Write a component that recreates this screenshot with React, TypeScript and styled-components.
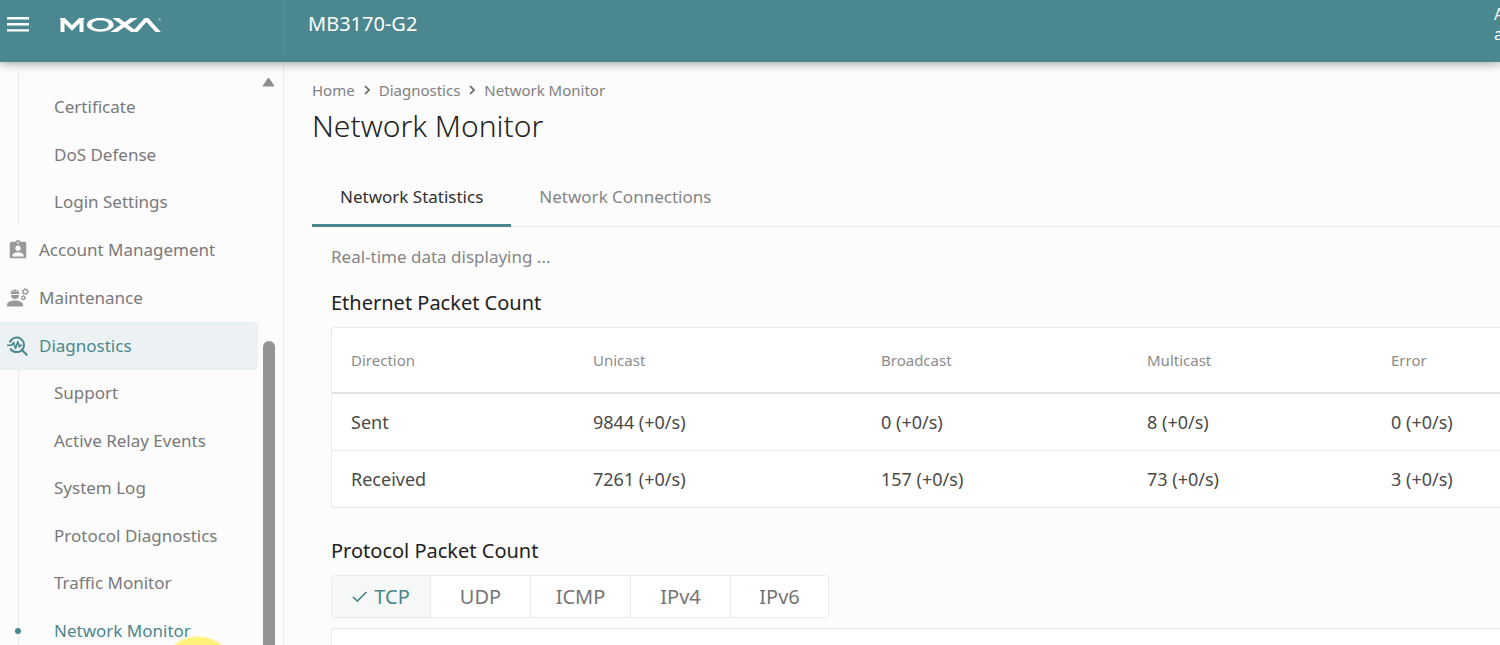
import React from 'react';
import styled, { createGlobalStyle } from 'styled-components';

const teal = '#4b878e';
const line = '#e9e9e9';

const GlobalStyle = createGlobalStyle`
  * { box-sizing: border-box; }
  body {
    margin: 0;
    background: #fcfcfc;
    color: #222;
    font-family: "Noto Sans", "Open Sans", sans-serif;
    overflow: hidden;
  }
  ul, ol { list-style: none; margin: 0; padding: 0; }
  a { color: inherit; text-decoration: none; }
  button { font: inherit; cursor: pointer; }
`;

const Page = styled.div`
  display: flex;
  flex-direction: column;
  height: 100vh;
  overflow: hidden;
`;

const TopBar = styled.header`
  display: flex;
  flex: none;
  height: 62px;
  background: ${teal};
  color: #fff;
  box-shadow: 0 1px 10px rgba(0, 0, 0, 0.4);
  z-index: 1;
`;

const Brand = styled.div`
  display: flex;
  gap: 31px;
  width: 284px;
  height: 53px;
  padding: 14px 0 0 7px;
  border-right: 1px solid #5a949a;
`;

const MenuButton = styled.button`
  display: flex;
  width: 22px;
  height: 20px;
  padding: 0;
  border: 0;
  background: none;
  color: inherit;
`;

const DeviceName = styled.div`
  flex: 1;
  padding: 10px 0 0 24px;
  font-size: 20px;
  line-height: 28px;
`;

const Account = styled.div`
  width: 6px;
  padding-top: 4px;
  font-size: 16px;
  line-height: 20px;
  white-space: nowrap;
`;

const Body = styled.div`
  display: flex;
  flex: 1;
  min-height: 0;
`;

const Sidebar = styled.aside`
  display: flex;
  flex: none;
  justify-content: space-between;
  width: 284px;
  padding-top: 10px;
  border-right: 1px solid ${line};
  overflow: hidden;
`;

const Nav = styled.nav`
  width: 258px;
  font-size: 17px;
  color: #797979;
`;

const SubList = styled.ul<{ $first?: boolean }>`
  margin-left: 18px;
  padding-top: ${(p) => (p.$first ? 12 : 0)}px;
  border-left: 1px solid ${line};
  li:nth-child(even) { padding-top: 1px; }
`;

const SubLink = styled.a<{ $active?: boolean }>`
  display: flex;
  position: relative;
  align-items: center;
  height: 47px;
  padding: 0 0 2px 35px;
  color: ${(p) => (p.$active ? teal : 'inherit')};
`;

const ActiveDot = styled.span`
  position: absolute;
  left: -4px;
  top: 20px;
  width: 6px;
  height: 6px;
  border-radius: 50%;
  background: ${teal};
`;

const PointerHalo = styled.span`
  position: absolute;
  left: 141px;
  top: 29px;
  width: 76px;
  height: 76px;
  border-radius: 50%;
  background: #fff27a;
  box-shadow: 0 0 3px #fff27a;
`;

const GroupLink = styled.a<{ $active?: boolean }>`
  display: flex;
  align-items: center;
  gap: 10px;
  height: 48px;
  padding: 0 0 1px 7px;
  border-radius: 0 4px 4px 0;
  background: ${(p) => (p.$active ? '#ecf2f3' : 'transparent')};
  color: ${(p) => (p.$active ? teal : 'inherit')};
  svg { flex: none; }
`;

const ScrollTrack = styled.div`
  display: flex;
  flex-direction: column;
  align-items: center;
  width: 13px;
  margin-right: 8px;
  padding-top: 5px;
`;

const ScrollThumb = styled.div`
  flex: 1;
  width: 12px;
  margin-top: 254px;
  border-radius: 6px 6px 0 0;
  background: #949494;
`;

const Main = styled.main`
  flex: 1;
  min-width: 0;
  padding: 16px 0 0 28px;
`;

const Crumbs = styled.ol`
  display: flex;
  align-items: center;
  height: 24px;
  font-size: 15px;
  color: #808080;
  li { display: flex; align-items: center; }
  svg { margin: 0 8px; }
`;

const Title = styled.h1`
  margin: 4px 0 0;
  font-size: 30px;
  font-weight: 300;
  line-height: 40px;
`;

const TabBar = styled.div`
  display: flex;
  margin-top: 23px;
  border-bottom: 1px solid ${line};
`;

const Tab = styled.button<{ $active?: boolean }>`
  height: 58px;
  margin-bottom: -1px;
  padding: 0 28px;
  border: 0;
  border-bottom: 3px solid ${(p) => (p.$active ? teal : 'transparent')};
  background: none;
  font-size: 17px;
  color: ${(p) => (p.$active ? '#303030' : '#858585')};
`;

const Panel = styled.section`
  padding: 18px 0 0 19px;
`;

const Status = styled.p`
  margin: 0;
  font-size: 17px;
  line-height: 24px;
  color: #858585;
`;

const SectionTitle = styled.h2<{ $gap: number }>`
  margin: ${(p) => p.$gap}px 0 10px;
  font-size: 20px;
  font-weight: 400;
  line-height: 28px;
`;

const Card = styled.div`
  border: 1px solid ${line};
  border-right: 0;
  border-radius: 4px 0 0 4px;
  background: #fff;
`;

const EmptyCard = styled(Card)`
  min-height: 80px;
  margin-top: 10px;
`;

const Table = styled.table`
  width: 100%;
  table-layout: fixed;
  border-collapse: collapse;
  th, td {
    padding: 0 0 0 19px;
    text-align: left;
    font-weight: 400;
    white-space: nowrap;
  }
  th {
    height: 65px;
    border-bottom: 2px solid #e2e2e2;
    font-size: 15px;
    color: #8c8c8c;
  }
  td {
    height: 57px;
    font-size: 18px;
    color: #4a4a4a;
  }
  tr + tr td { border-top: 1px solid ${line}; }
`;

const Col = styled.col<{ $w?: number }>`
  width: ${(p) => (p.$w ? `${p.$w}px` : 'auto')};
`;

const Toggle = styled.div`
  display: inline-flex;
  border: 1px solid ${line};
  border-radius: 4px;
  overflow: hidden;
  vertical-align: top;
`;

const ToggleButton = styled.button<{ $active?: boolean }>`
  display: flex;
  align-items: center;
  justify-content: center;
  gap: 6px;
  width: 100px;
  height: 41px;
  padding: 0 0 1px;
  border: 0;
  background: ${(p) => (p.$active ? '#f6f7f7' : '#fff')};
  font-size: 20px;
  color: ${(p) => (p.$active ? teal : '#757575')};
  & + & { border-left: 1px solid ${line}; }
  &:first-child, &:last-child { width: 98px; }
`;

const MenuIcon = () => (
  <svg width="22" height="20" viewBox="0 0 22 20" stroke="#fff" strokeWidth="2.4">
    <path d="M0 4.2H22M0 10.2H22M0 16.4H22" />
  </svg>
);

const LogoMark = styled.svg`
  margin-top: 4px;
  overflow: hidden;
`;

const Logo = () => (
  <LogoMark width="102" height="14" viewBox="0 0 102 14" fill="none" stroke="#fff" role="img" aria-label="Moxa">
    <path d="M2.500 14V0M21.500 14V0" strokeWidth="4" />
    <polyline points="0,-2 12,10 24,-2" strokeWidth="4" />
    <path d="M27 6.800A13.300 7 0 1 1 53.600 6.800A13.300 7 0 1 1 27 6.800ZM31.800 6.800A8.500 4.500 0 1 0 48.800 6.800A8.500 4.500 0 1 0 31.800 6.800Z" fill="#fff" stroke="none" fillRule="evenodd" />
    <path d="M53 -2L77 16M77 -2L51 16" strokeWidth="4" />
    <polyline points="73,16 86.500,1 100,16" strokeWidth="4" />
    <circle cx="99.500" cy="1.500" r="1" strokeWidth="0.700" opacity="0.600" />
  </LogoMark>
);

const BadgeIcon = () => (
  <svg width="22" height="22" viewBox="0 0 24 24" fill="#999">
    <path d="M19 3h-4.180C14.400 1.840 13.300 1 12 1s-2.400.84-2.820 2H5c-1.100 0-2 .9-2 2v14c0 1.100.9 2 2 2h14c1.100 0 2-.9 2-2V5c0-1.100-.9-2-2-2zm-7 0c.55 0 1 .45 1 1s-.45 1-1 1-1-.45-1-1 .45-1 1-1zm0 4c1.660 0 3 1.340 3 3s-1.340 3-3 3-3-1.340-3-3 1.340-3 3-3zm6 12H6v-1.400c0-2 4-3.100 6-3.100s6 1.100 6 3.100V19z" />
  </svg>
);

const EngineerIcon = () => (
  <svg width="22" height="22" viewBox="0 0 22 22" fill="#999">
    <path d="M0 19.500V17.400C0 14.800 4.500 13.400 8 13.400S16 14.800 16 17.400V19.500Z" />
    <path d="M4 8H12A4 4 0 0 1 4 8Z" />
    <path d="M3.400 7V6.200H4C4 4.500 5 3.200 6.400 2.600V4.800H7.200V2.300H8.800V4.800H9.600V2.600C11 3.200 12 4.500 12 6.200H12.600V7Z" />
    <circle cx="18.300" cy="4.600" r="2.300" fill="none" stroke="#999" strokeWidth="1.300" />
    <circle cx="18.300" cy="4.600" r="3.200" fill="none" stroke="#999" strokeWidth="1" strokeDasharray="1.400 1.950" />
    <circle cx="16.300" cy="10.800" r="1.600" fill="none" stroke="#999" strokeWidth="1.200" />
    <circle cx="16.300" cy="10.800" r="2.300" fill="none" stroke="#999" strokeWidth="0.800" strokeDasharray="1 1.400" />
  </svg>
);

const DiagnosticsIcon = () => (
  <svg width="22" height="22" viewBox="0 0 22 22" fill="none" stroke={teal} strokeLinejoin="round">
    <path d="M2.800 7.300A7.300 7.300 0 1 1 3.300 13.400" strokeWidth="2" />
    <path d="M14.600 14.800L20.300 20.200" strokeWidth="2.200" />
    <path d="M0 10.200H4.800L6.600 7.400L8.600 13.400L10.800 6.600L12.400 12L13.500 10.200H15" strokeWidth="1.600" />
  </svg>
);

const Chevron = () => (
  <svg width="8" height="10" viewBox="0 0 8 10" fill="none" stroke="#606060" strokeWidth="1.700">
    <path d="M2 1L6 5L2 9" />
  </svg>
);

const CheckIcon = () => (
  <svg width="16" height="14" viewBox="0 0 16 14" fill="none" stroke={teal} strokeWidth="1.700">
    <path d="M1 8L5.300 12L14.500 3" />
  </svg>
);

const ScrollUp = () => (
  <svg width="13" height="10" viewBox="0 0 13 10" fill="#8f8f8f" stroke="#8f8f8f" strokeLinejoin="round">
    <path d="M6.500 1L12 9H1Z" />
  </svg>
);

const securityItems = ['Certificate', 'DoS Defense', 'Login Settings'];
const diagnosticItems = [
  'Support',
  'Active Relay Events',
  'System Log',
  'Protocol Diagnostics',
  'Traffic Monitor',
  'Network Monitor',
];
const columns = ['Direction', 'Unicast', 'Broadcast', 'Multicast', 'Error'];
const rows = [
  ['Sent', '9844 (+0/s)', '0 (+0/s)', '8 (+0/s)', '0 (+0/s)'],
  ['Received', '7261 (+0/s)', '157 (+0/s)', '73 (+0/s)', '3 (+0/s)'],
];
const protocols = ['TCP', 'UDP', 'ICMP', 'IPv4', 'IPv6'];

export default function App() {
  const [protocol, setProtocol] = React.useState('TCP');
  return (
    <Page>
      <GlobalStyle />
      <TopBar>
        <Brand>
          <MenuButton aria-label="Menu"><MenuIcon /></MenuButton>
          <Logo />
        </Brand>
        <DeviceName>MB3170-G2</DeviceName>
        <Account>
          <div>A</div>
          <div>a</div>
        </Account>
      </TopBar>
      <Body>
        <Sidebar>
          <Nav>
            <SubList $first>
              {securityItems.map((item) => (
                <li key={item}><SubLink href="#">{item}</SubLink></li>
              ))}
            </SubList>
            <GroupLink href="#"><BadgeIcon />Account Management</GroupLink>
            <GroupLink href="#"><EngineerIcon />Maintenance</GroupLink>
            <GroupLink href="#" $active><DiagnosticsIcon />Diagnostics</GroupLink>
            <SubList>
              {diagnosticItems.map((item) => {
                const active = item === 'Network Monitor';
                return (
                  <li key={item}>
                    <SubLink href="#" $active={active}>
                      {active && <ActiveDot />}
                      {item}
                      {active && <PointerHalo />}
                    </SubLink>
                  </li>
                );
              })}
            </SubList>
          </Nav>
          <ScrollTrack>
            <ScrollUp />
            <ScrollThumb />
          </ScrollTrack>
        </Sidebar>
        <Main>
          <Crumbs>
            <li><a href="#">Home</a><Chevron /></li>
            <li><a href="#">Diagnostics</a><Chevron /></li>
            <li>Network Monitor</li>
          </Crumbs>
          <Title>Network Monitor</Title>
          <TabBar role="tablist">
            <Tab role="tab" aria-selected $active>Network Statistics</Tab>
            <Tab role="tab" aria-selected={false}>Network Connections</Tab>
          </TabBar>
          <Panel>
            <Status>Real-time data displaying ...</Status>
            <SectionTitle $gap={20}>Ethernet Packet Count</SectionTitle>
            <Card>
              <Table>
                <colgroup>
                  <Col $w={242} />
                  <Col $w={288} />
                  <Col $w={266} />
                  <Col $w={244} />
                  <Col />
                </colgroup>
                <thead>
                  <tr>{columns.map((c) => <th key={c} scope="col">{c}</th>)}</tr>
                </thead>
                <tbody>
                  {rows.map((r) => (
                    <tr key={r[0]}>{r.map((v, i) => <td key={i}>{v}</td>)}</tr>
                  ))}
                </tbody>
              </Table>
            </Card>
            <SectionTitle $gap={29}>Protocol Packet Count</SectionTitle>
            <Toggle role="group" aria-label="Protocol">
              {protocols.map((p) => (
                <ToggleButton
                  key={p}
                  $active={p === protocol}
                  aria-pressed={p === protocol}
                  onClick={() => setProtocol(p)}
                >
                  {p === protocol && <CheckIcon />}
                  {p}
                </ToggleButton>
              ))}
            </Toggle>
            <EmptyCard />
          </Panel>
        </Main>
      </Body>
    </Page>
  );
}
